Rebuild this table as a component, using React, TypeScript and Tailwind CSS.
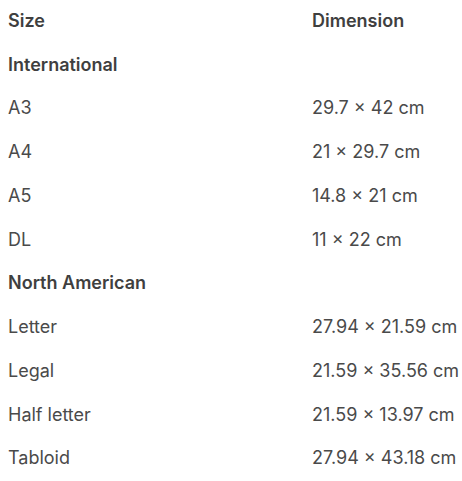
import React from "react";

type Row = { a: string; b?: string; bold?: boolean };

const rows: Row[] = [
  { a: "Size", b: "Dimension", bold: true },
  { a: "International", bold: true },
  { a: "A3", b: "29.7 × 42 cm" },
  { a: "A4", b: "21 × 29.7 cm" },
  { a: "A5", b: "14.8 × 21 cm" },
  { a: "DL", b: "11 × 22 cm" },
  { a: "North American", bold: true },
  { a: "Letter", b: "27.94 × 21.59 cm" },
  { a: "Legal", b: "21.59 × 35.56 cm" },
  { a: "Half letter", b: "21.59 × 13.97 cm" },
  { a: "Tabloid", b: "27.94 × 43.18 cm" },
];

export default function App() {
  return (
    <div
      className="w-[462px] h-[481px] overflow-hidden bg-white text-[18px] text-[#4a4a4a]"
      style={{ fontFamily: "Inter, 'Noto Sans', sans-serif" }}
    >
      <div className="mt-[-1px] px-2">
        {rows.map((r, i) => (
          <div
            key={i}
            className={`grid grid-cols-[304px_1fr] h-[43.75px] items-center leading-6 whitespace-nowrap ${
              r.bold ? "font-semibold text-[#3f3f3f]" : "font-normal"
            }`}
          >
            <div>{r.a}</div>
            <div>{r.b ?? ""}</div>
          </div>
        ))}
      </div>
    </div>
  );
}
